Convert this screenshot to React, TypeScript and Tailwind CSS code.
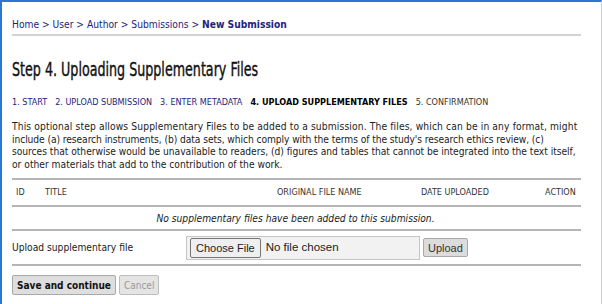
export default function App() {
  const body = { fontFamily: '"DejaVu Sans Condensed", "DejaVu Sans", sans-serif', fontStretch: "condensed" } as const;
  const arial = { fontFamily: '"Liberation Sans", Arial, sans-serif' } as const;

  return (
    <div className="w-[602px] h-[304px] overflow-hidden bg-white border-t-2 border-l-2 border-[#2a78d6] border-r border-r-[#cfcfcf]">
      <div className="w-[579px] pl-[10px] text-[10.2px] text-[#222]" style={body}>
        {/* BREADCRUMB */}
        <div className="pt-[17px] h-[32px] text-[10.2px] text-[#23237d] leading-[12px]">
          Home &gt; User &gt; Author &gt; Submissions &gt; <span className="font-bold">New Submission</span>
        </div>
        <div className="h-[2px] bg-[#d3d3d3]" />

        {/* TITLE */}
        <h1
          className="mt-[21px] text-[20px] leading-[24px] text-[#111] origin-left scale-x-[0.705] whitespace-nowrap"
          style={{ fontFamily: '"DejaVu Sans Condensed", sans-serif', WebkitTextStroke: "0.4px #111" }}
        >
          Step 4. Uploading Supplementary Files
        </h1>

        {/* STEPS */}
        <div className="mt-[15px] flex gap-[8px] text-[9px] leading-[12px] uppercase">
          <span className="text-[#23237d]">1. Start</span>
          <span className="text-[#23237d]">2. Upload Submission</span>
          <span className="text-[#23237d]">3. Enter Metadata</span>
          <span className="font-bold text-black">4. Upload Supplementary Files</span>
          <span className="text-[#333]">5. Confirmation</span>
        </div>

        {/* DESCRIPTION */}
        <p className="mt-[13px] leading-[12.6px] text-[10.2px]">
          <span className="block whitespace-nowrap tracking-[0.13px]">This optional step allows Supplementary Files to be added to a submission. The files, which can be in any format, might</span>
          <span className="block whitespace-nowrap tracking-[-0.08px]">include (a) research instruments, (b) data sets, which comply with the terms of the study's research ethics review, (c)</span>
          <span className="block whitespace-nowrap tracking-[-0.03px]">sources that otherwise would be unavailable to readers, (d) figures and tables that cannot be integrated into the text itself,</span>
          <span className="block whitespace-nowrap">or other materials that add to the contribution of the work.</span>
        </p>

        {/* TABLE */}
        <div className="mt-[7px] h-[2px] bg-[#b5b5b5]" />
        <div className="flex items-center h-[25px] text-[9px] uppercase text-[#333]">
          <span className="w-[33px] pl-[4px]">ID</span>
          <span className="w-[232px]">Title</span>
          <span className="w-[144px]">Original File Name</span>
          <span className="w-[124px]">Date Uploaded</span>
          <span>Action</span>
        </div>
        <div className="h-[2px] bg-[#b5b5b5]" />
        <div className="h-[22px] flex items-center justify-center pr-[2px] italic">
          No supplementary files have been added to this submission.
        </div>
        <div className="h-[2px] bg-[#b5b5b5]" />

        {/* UPLOAD */}
        <div className="h-[33px] flex items-center">
          <span className="w-[174px]">Upload supplementary file</span>
          <div className="w-[234px] h-[24px] flex items-center gap-[5px] bg-[#f2f2f2] border border-[#c6c6c6] pl-[3px] text-[11.5px] text-[#222]" style={arial}>
            <span className="h-[20px] px-[5px] flex items-center bg-[#efefef] border border-[#767676] rounded-[2px] text-[11px]">Choose File</span>
            <span>No file chosen</span>
          </div>
          <span className="ml-[3px] h-[19px] px-[4px] flex items-center bg-[#dcdcdc] border border-[#a9a9a9] rounded-[2px] text-[11px] text-[#333]" style={arial}>
            Upload
          </span>
        </div>
        <div className="h-[2px] bg-[#b5b5b5]" />

        {/* ACTIONS */}
        <div className="mt-[9px] flex gap-[3px]">
          <button className="h-[20px] px-[4px] bg-[#dedede] border border-[#a9a9a9] rounded-[2px] font-bold text-[10px] text-[#111]" style={body}>
            Save and continue
          </button>
          <button className="h-[20px] px-[4px] bg-[#e4e4e4] border border-[#bdbdbd] rounded-[2px] text-[10px] text-[#9a9a9a]" style={body}>
            Cancel
          </button>
        </div>
      </div>
    </div>
  );
}
